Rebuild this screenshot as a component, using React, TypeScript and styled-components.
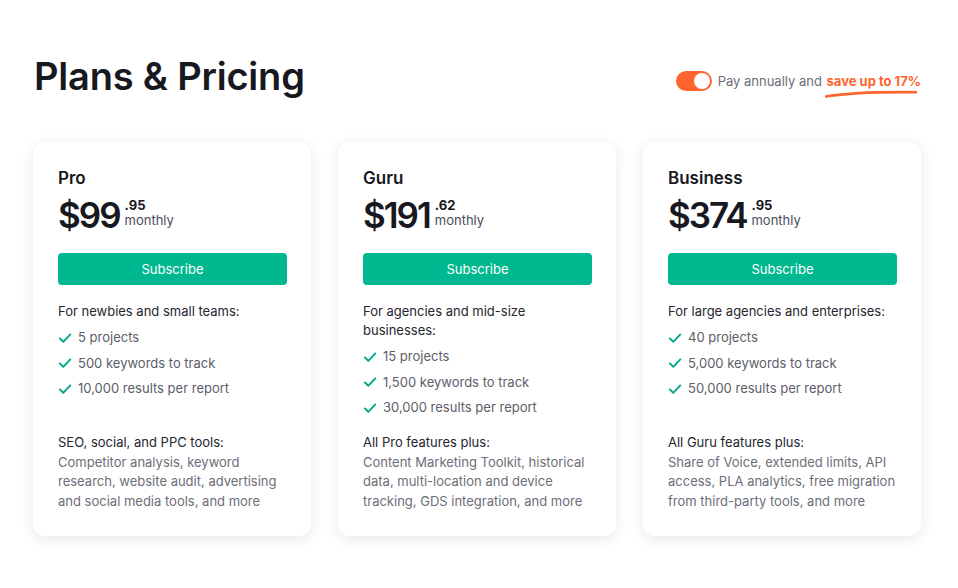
import { createGlobalStyle } from "styled-components";
import styled from "styled-components";

const GlobalStyle = createGlobalStyle`
  html, body {
    margin: 0;
    padding: 0;
    background: #ffffff;
    font-family: Inter, "Noto Sans", sans-serif;
    color: #1b1b24;
  }
`;

type Plan = {
  name: string;
  whole: string;
  cents: string;
  audience: string;
  features: string[];
  extraTitle: string;
  extra: string;
};

const plans: Plan[] = [
  {
    name: "Pro",
    whole: "$99",
    cents: ".95",
    audience: "For newbies and small teams:",
    features: ["5 projects", "500 keywords to track", "10,000 results per report"],
    extraTitle: "SEO, social, and PPC tools:",
    extra: "Competitor analysis, keyword research, website audit, advertising and social media tools, and more",
  },
  {
    name: "Guru",
    whole: "$191",
    cents: ".62",
    audience: "For agencies and mid-size businesses:",
    features: ["15 projects", "1,500 keywords to track", "30,000 results per report"],
    extraTitle: "All Pro features plus:",
    extra: "Content Marketing Toolkit, historical data, multi-location and device tracking, GDS integration, and more",
  },
  {
    name: "Business",
    whole: "$374",
    cents: ".95",
    audience: "For large agencies and enterprises:",
    features: ["40 projects", "5,000 keywords to track", "50,000 results per report"],
    extraTitle: "All Guru features plus:",
    extra: "Share of Voice, extended limits, API access, PLA analytics, free migration from third-party tools, and more",
  },
];

export default function App() {
  return (
    <>
      <GlobalStyle />
      <Page>
        <Header>
          <Title>Plans &amp; Pricing</Title>
          <Billing>
            <Toggle>
              <Knob />
            </Toggle>
            <BillingText>
              Pay annually and <Save>save up to 17%<Swoosh viewBox="0 0 92 8" preserveAspectRatio="none">
                <path d="M1 6.5 C 20 3.5, 55 1.8, 91 2.2" stroke="#ff642d" strokeWidth="2.6" fill="none" strokeLinecap="round" />
              </Swoosh></Save>
            </BillingText>
          </Billing>
        </Header>
        <Cards>
          {plans.map((p) => (
            <Card key={p.name}>
              <PlanName>{p.name}</PlanName>
              <PriceRow>
                <Whole>{p.whole}</Whole>
                <PriceSide>
                  <Cents>{p.cents}</Cents>
                  <Period>monthly</Period>
                </PriceSide>
              </PriceRow>
              <Subscribe>Subscribe</Subscribe>
              <Limits>
                <Audience>{p.audience}</Audience>
                <FeatureList>
                  {p.features.map((f) => (
                    <Feature key={f}>
                      <Check viewBox="0 0 14 14">
                        <path d="M1.8 7.4 L5.3 10.8 L12.3 3.4" stroke="#00a88a" strokeWidth="1.9" fill="none" strokeLinecap="round" strokeLinejoin="round" />
                      </Check>
                      {f}
                    </Feature>
                  ))}
                </FeatureList>
              </Limits>
              <ExtraTitle>{p.extraTitle}</ExtraTitle>
              <ExtraText>{p.extra}</ExtraText>
            </Card>
          ))}
        </Cards>
      </Page>
    </>
  );
}

const Page = styled.div`
  width: 958px;
  height: 588px;
  box-sizing: border-box;
  padding: 52px 38px 0 33px;
`;

const Header = styled.div`
  display: flex;
  align-items: center;
  justify-content: space-between;
  height: 48px;
  margin-bottom: 42px;
`;

const Title = styled.h1`
  margin: 0 0 0 1px;
  font-size: 38px;
  font-weight: 600;
  letter-spacing: -0.2px;
  color: #181820;
`;

const Billing = styled.div`
  display: flex;
  align-items: center;
  gap: 6px;
  margin-top: 10px;
  margin-right: -1px;
`;

const Toggle = styled.div`
  width: 36px;
  height: 20px;
  border-radius: 10px;
  background: #ff642d;
  display: flex;
  align-items: center;
  justify-content: flex-end;
  padding: 0 2px;
  box-sizing: border-box;
`;

const Knob = styled.div`
  width: 16px;
  height: 16px;
  border-radius: 50%;
  background: #ffffff;
`;

const BillingText = styled.span`
  font-size: 13px;
  color: #6c6e79;
`;

const Save = styled.span`
  position: relative;
  margin-left: 1px;
  color: #ff642d;
  font-weight: 700;
`;

const Swoosh = styled.svg`
  position: absolute;
  left: -2px;
  bottom: -9px;
  width: 92px;
  height: 8px;
`;

const Cards = styled.div`
  display: grid;
  grid-template-columns: repeat(3, 278px);
  gap: 27px;
`;

const Card = styled.div`
  height: 394px;
  box-sizing: border-box;
  padding: 24px 24px 0 25px;
  background: #ffffff;
  border-radius: 12px;
  box-shadow: 0 3px 14px rgba(30, 30, 60, 0.1);
  display: flex;
  flex-direction: column;
`;

const PlanName = styled.div`
  font-size: 17px;
  font-weight: 600;
  color: #181820;
  line-height: 24px;
`;

const PriceRow = styled.div`
  display: flex;
  align-items: flex-start;
  gap: 5px;
  margin-top: 3px;
  height: 44px;
`;

const Whole = styled.div`
  font-size: 35px;
  font-weight: 600;
  letter-spacing: -2px;
  line-height: 44px;
  color: #181820;
`;

const PriceSide = styled.div`
  display: flex;
  flex-direction: column;
  padding-top: 5px;
`;

const Cents = styled.span`
  font-size: 13px;
  font-weight: 700;
  line-height: 14px;
  color: #181820;
`;

const Period = styled.span`
  font-size: 13px;
  line-height: 16px;
  color: #4a4c57;
`;

const Subscribe = styled.button`
  margin-top: 16px;
  height: 32px;
  width: 100%;
  border: none;
  border-radius: 4px;
  background: #00b890;
  color: #ffffff;
  font-family: inherit;
  font-size: 13px;
  cursor: pointer;
`;

const Limits = styled.div`
  margin-top: 17px;
  height: 131px;
`;

const Audience = styled.div`
  font-size: 13px;
  line-height: 19px;
  color: #25262e;
`;

const FeatureList = styled.ul`
  list-style: none;
  margin: 7px 0 0;
  padding: 0;
  display: flex;
  flex-direction: column;
  gap: 6px;
`;

const Feature = styled.li`
  display: flex;
  align-items: center;
  gap: 6px;
  font-size: 13px;
  line-height: 19.5px;
  color: #5c5e69;
`;

const Check = styled.svg`
  width: 14px;
  height: 14px;
  flex-shrink: 0;
`;

const ExtraTitle = styled.div`
  font-size: 13px;
  line-height: 19.5px;
  color: #25262e;
`;

const ExtraText = styled.div`
  font-size: 13px;
  line-height: 19.5px;
  color: #6c6e79;
`;
